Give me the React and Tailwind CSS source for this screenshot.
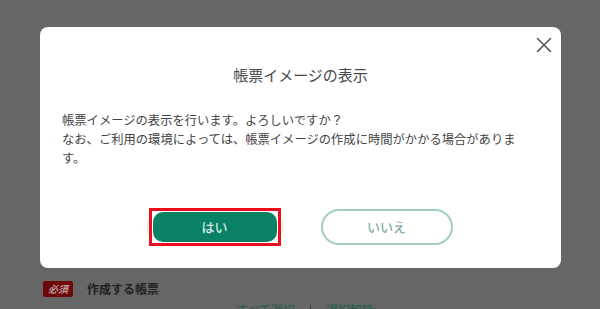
import React from 'react';

const font = { fontFamily: '"Noto Sans CJK JP", "Noto Sans", sans-serif' };

const CloseIcon = () => (
  <svg width="16" height="16" viewBox="0 0 16 16" fill="none" stroke="#555" strokeWidth="1.6" strokeLinecap="round">
    <path d="M1.5 1.5 L14.5 14.5 M14.5 1.5 L1.5 14.5" />
  </svg>
);

const App = () => {
  return (
    <div className="w-[600px] h-[309px] bg-[#666666] overflow-hidden" style={font}>
      <div className="pt-[27px] pl-[40px]">
        <div className="relative w-[521px] h-[241px] bg-white rounded-[8px]">
          <button type="button" aria-label="閉じる" className="absolute top-[10px] right-[9px] p-0">
            <CloseIcon />
          </button>
          <div className="pt-[38px] text-center text-[15px] leading-[20px] text-[#4a4a4a]">帳票イメージの表示</div>
          <div className="mt-[26px] ml-[22px] w-[460px] text-[12.3px] leading-[19px] text-[#444]">
            帳票イメージの表示を行います。よろしいですか？
            <br />
            なお、ご利用の環境によっては、帳票イメージの作成に時間がかかる場合があります。
          </div>
          <div className="absolute left-0 right-0 top-[181px] flex justify-center gap-[40px] items-center h-[38px]">
            <div className="relative w-[132px] h-[38px]">
              <div className="absolute inset-x-[-2px] top-[1px] bottom-[1px] rounded-full border border-[#cfe3dc]" />
              <div className="absolute inset-0 border-[3px] border-[#e8101c] bg-white p-px">
                <button type="button" className="w-full h-full rounded-[10px] bg-[#0a8064] text-[#d6ece4] text-[13px] font-medium">
                  はい
                </button>
              </div>
            </div>
            <button
              type="button"
              className="w-[132px] h-[36px] rounded-full border-2 border-[#a3cfc1] bg-white text-[#7fb0a3] text-[13px] font-medium"
            >
              いいえ
            </button>
          </div>
        </div>
      </div>
      <div className="mt-[12px] pl-[43px] flex items-center gap-[14px]">
        <span className="w-[30px] h-[16px] rounded-[2px] bg-[#6e0808] text-[#b89a9a] text-[10px] font-bold italic leading-[16px] text-center">
          必須
        </span>
        <span className="text-[12px] font-bold text-[#222]">作成する帳票</span>
      </div>
      <div className="mt-[3px] flex justify-center gap-[14px] text-[12px] text-[#1f5a46] pl-[10px]">
        <span>すべて選択</span>
        <span className="text-[#333]">|</span>
        <span>選択解除</span>
      </div>
    </div>
  );
};

export default App;
